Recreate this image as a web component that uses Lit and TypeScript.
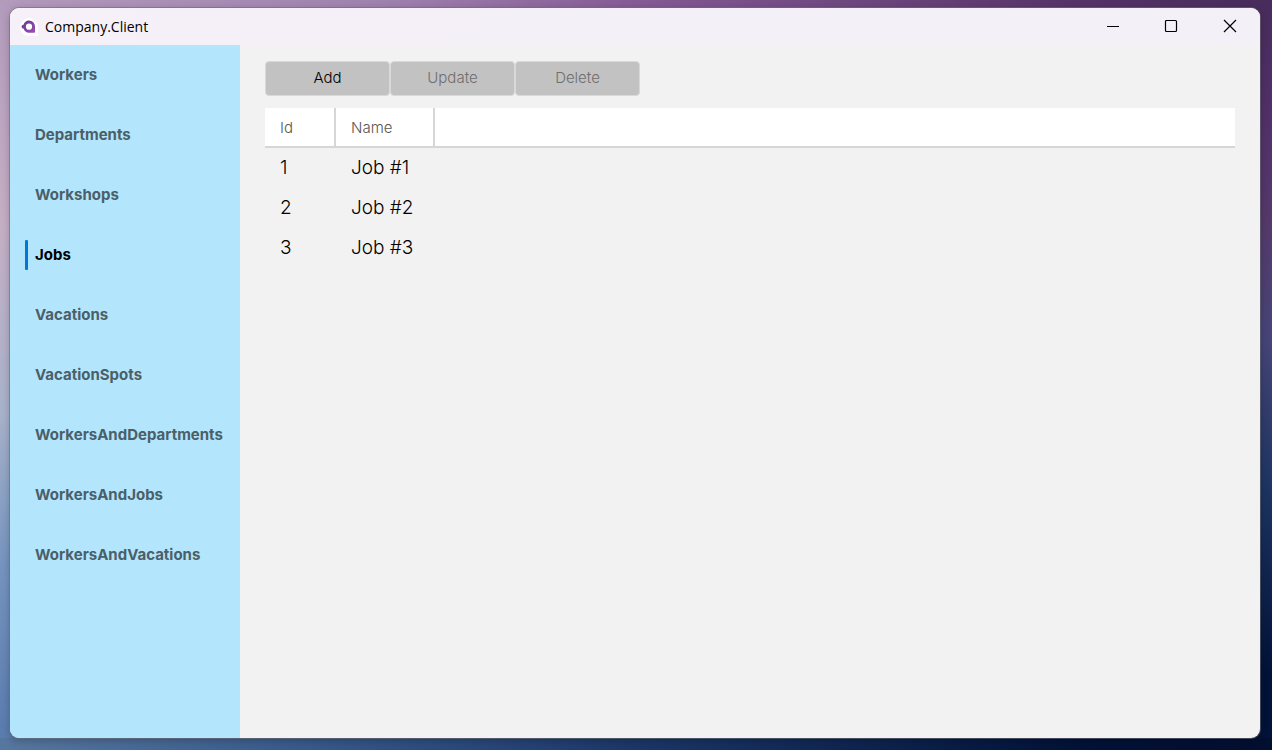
import { LitElement, html, css } from "lit";
import { customElement, state } from "lit/decorators.js";
import { classMap } from "lit/directives/class-map.js";

interface Job {
  id: number;
  name: string;
}

@customElement("app-title-bar")
class AppTitleBar extends LitElement {
  static styles = css`
    :host {
      display: flex;
      align-items: stretch;
      height: 37px;
      background: linear-gradient(90deg, #f6f0f8, #f3f0f8);
    }
    .logo {
      align-self: center;
      width: 18px;
      height: 18px;
      margin: 0 7px 0 10px;
    }
    .title {
      flex: 1;
      margin: 0;
      font: 400 14px/37px "Open Sans", "Noto Sans", sans-serif;
      color: #000;
    }
    .control {
      display: grid;
      place-items: center;
      width: 58px;
      border: 0;
      padding: 0 0 2px;
      background: none;
    }
    .control:last-child {
      width: 60px;
    }
    .control:hover {
      background: #e6e1ea;
    }
    .glyph {
      width: 14px;
      height: 14px;
      fill: none;
      stroke: #000;
    }
  `;

  render() {
    return html`
      <svg class="logo" viewBox="0 0 18 18" aria-hidden="true">
        <defs>
          <linearGradient id="violet" x1="0" y1="0" x2="1" y2="1">
            <stop offset="0" stop-color="#5c3a92" />
            <stop offset="1" stop-color="#a04bb4" />
          </linearGradient>
        </defs>
        <path fill="#fff" d="M9 0a9 9 0 0 1 9 9v7.500q0 1.500-1.500 1.500H9A9 9 0 0 1 9 0z" />
        <path
          fill="url(#violet)"
          fill-rule="evenodd"
          d="M9 2.500a6 6 0 0 1 6 6V14q0 .8-.8.800H9A6 6 0 0 1 3.500 10.600a1.900 1.900 0 1 1 0-3.900A6 6 0 0 1 9 2.500zm0 3.100a3.100 3.100 0 1 0 0 6.200a3.100 3.100 0 0 0 0-6.200z"
        />
      </svg>
      <h1 class="title">Company.Client</h1>
      <button class="control" aria-label="Minimize">
        <svg class="glyph" viewBox="0 0 14 14"><path d="M1 7.500h12" /></svg>
      </button>
      <button class="control" aria-label="Maximize">
        <svg class="glyph" viewBox="0 0 14 14"><rect x="1.500" y="1.500" width="11" height="11" rx="1" stroke-width="1.200" /></svg>
      </button>
      <button class="control" aria-label="Close">
        <svg class="glyph" viewBox="0 0 14 14"><path stroke-width="1.200" d="M1 1l12 12M13 1L1 13" /></svg>
      </button>
    `;
  }
}

@customElement("app-root")
class AppRoot extends LitElement {
  static styles = css`
    :host {
      display: flex;
      box-sizing: border-box;
      min-height: 100vh;
      padding: 8px 12px 12px 10px;
      font: 15px/20px Inter, "Liberation Sans", sans-serif;
      color: #000;
      background:
        linear-gradient(90deg, #b39bbd, #a083b0 30%, #865b96 50%, #56336a 85%, #482c5c) top / 100% 8px no-repeat,
        linear-gradient(90deg, #56779f, #37588a 25%, #1b3768 50%, #021238 85%, #020f30) bottom / 100% 12px no-repeat,
        linear-gradient(#b39bbd, #c6b0c6 30%, #a9b3cc 55%, #7795c0 75%, #587aae) left / 50% 100% no-repeat,
        linear-gradient(#482c5c, #52306a 15%, #553a6c 30%, #464578 45%, #1d3562 65%, #021238 90%) right / 50% 100% no-repeat;
    }
    .window {
      flex: 1;
      display: flex;
      flex-direction: column;
      overflow: hidden;
      border-radius: 9px;
      background: #f2f2f2;
      box-shadow: 0 0 0 1px rgba(110, 110, 120, 0.6), 0 2px 10px rgba(0, 0, 0, 0.25);
    }
    .body {
      flex: 1;
      display: flex;
    }
    .nav {
      flex: none;
      display: flex;
      flex-direction: column;
      width: 230px;
      background: #b3e5fc;
    }
    .tab {
      display: flex;
      align-items: center;
      height: 60px;
      padding: 0 0 0 15px;
      border: 0;
      background: none;
      font: inherit;
      font-weight: 700;
      color: #4b5f68;
    }
    .tab::before {
      content: "";
      width: 3px;
      height: 30px;
      margin-right: 7px;
      border-radius: 1px;
    }
    .tab.selected {
      color: #000;
    }
    .tab.selected::before {
      background: #0078d7;
    }
    .content {
      flex: 1;
      padding: 16px 25px;
    }
    .toolbar {
      display: flex;
      margin-bottom: 12px;
    }
    .action {
      width: 125px;
      height: 35px;
      padding: 0 0 2px;
      border: 1px solid #d9d9d9;
      border-radius: 4px;
      background: #c2c2c2;
      font: inherit;
      font-weight: 300;
      color: #000;
    }
    .action:disabled {
      color: #6e6e6e;
    }
    .grid {
      width: 100%;
      table-layout: fixed;
      border-collapse: separate;
      border-spacing: 0;
    }
    .head {
      box-sizing: border-box;
      height: 40px;
      padding: 2px 15px 0;
      border-bottom: 2px solid #d6d6d6;
      border-right: 2px solid #d6d6d6;
      background: #fff;
      font-weight: 300;
      text-align: left;
      color: #555;
    }
    .head.id {
      width: 71px;
    }
    .head.name {
      width: 99px;
    }
    .head.rest {
      border-right: 0;
    }
    .cell {
      height: 40px;
      padding: 0 15px;
      font-size: 19px;
      font-weight: 300;
      white-space: nowrap;
    }
  `;

  private tabs = [
    "Workers",
    "Departments",
    "Workshops",
    "Jobs",
    "Vacations",
    "VacationSpots",
    "WorkersAndDepartments",
    "WorkersAndJobs",
    "WorkersAndVacations",
  ];

  private jobs: Job[] = [1, 2, 3].map((id) => ({ id, name: `Job #${id}` }));

  @state() private selected = "Jobs";

  render() {
    return html`
      <div class="window">
        <app-title-bar></app-title-bar>
        <div class="body">
          <nav class="nav">
            ${this.tabs.map(
              (tab) => html`<button
                class=${classMap({ tab: true, selected: tab === this.selected })}
                @click=${() => (this.selected = tab)}
              >${tab}</button>`
            )}
          </nav>
          <main class="content">
            <div class="toolbar">
              <button class="action">Add</button>
              <button class="action" disabled>Update</button>
              <button class="action" disabled>Delete</button>
            </div>
            <table class="grid">
              <thead>
                <tr>
                  <th class="head id">Id</th>
                  <th class="head name">Name</th>
                  <td class="head rest"></td>
                </tr>
              </thead>
              <tbody>
                ${this.jobs.map(
                  (job) => html`<tr>
                    <td class="cell">${job.id}</td>
                    <td class="cell">${job.name}</td>
                    <td class="cell"></td>
                  </tr>`
                )}
              </tbody>
            </table>
          </main>
        </div>
      </div>
    `;
  }
}
